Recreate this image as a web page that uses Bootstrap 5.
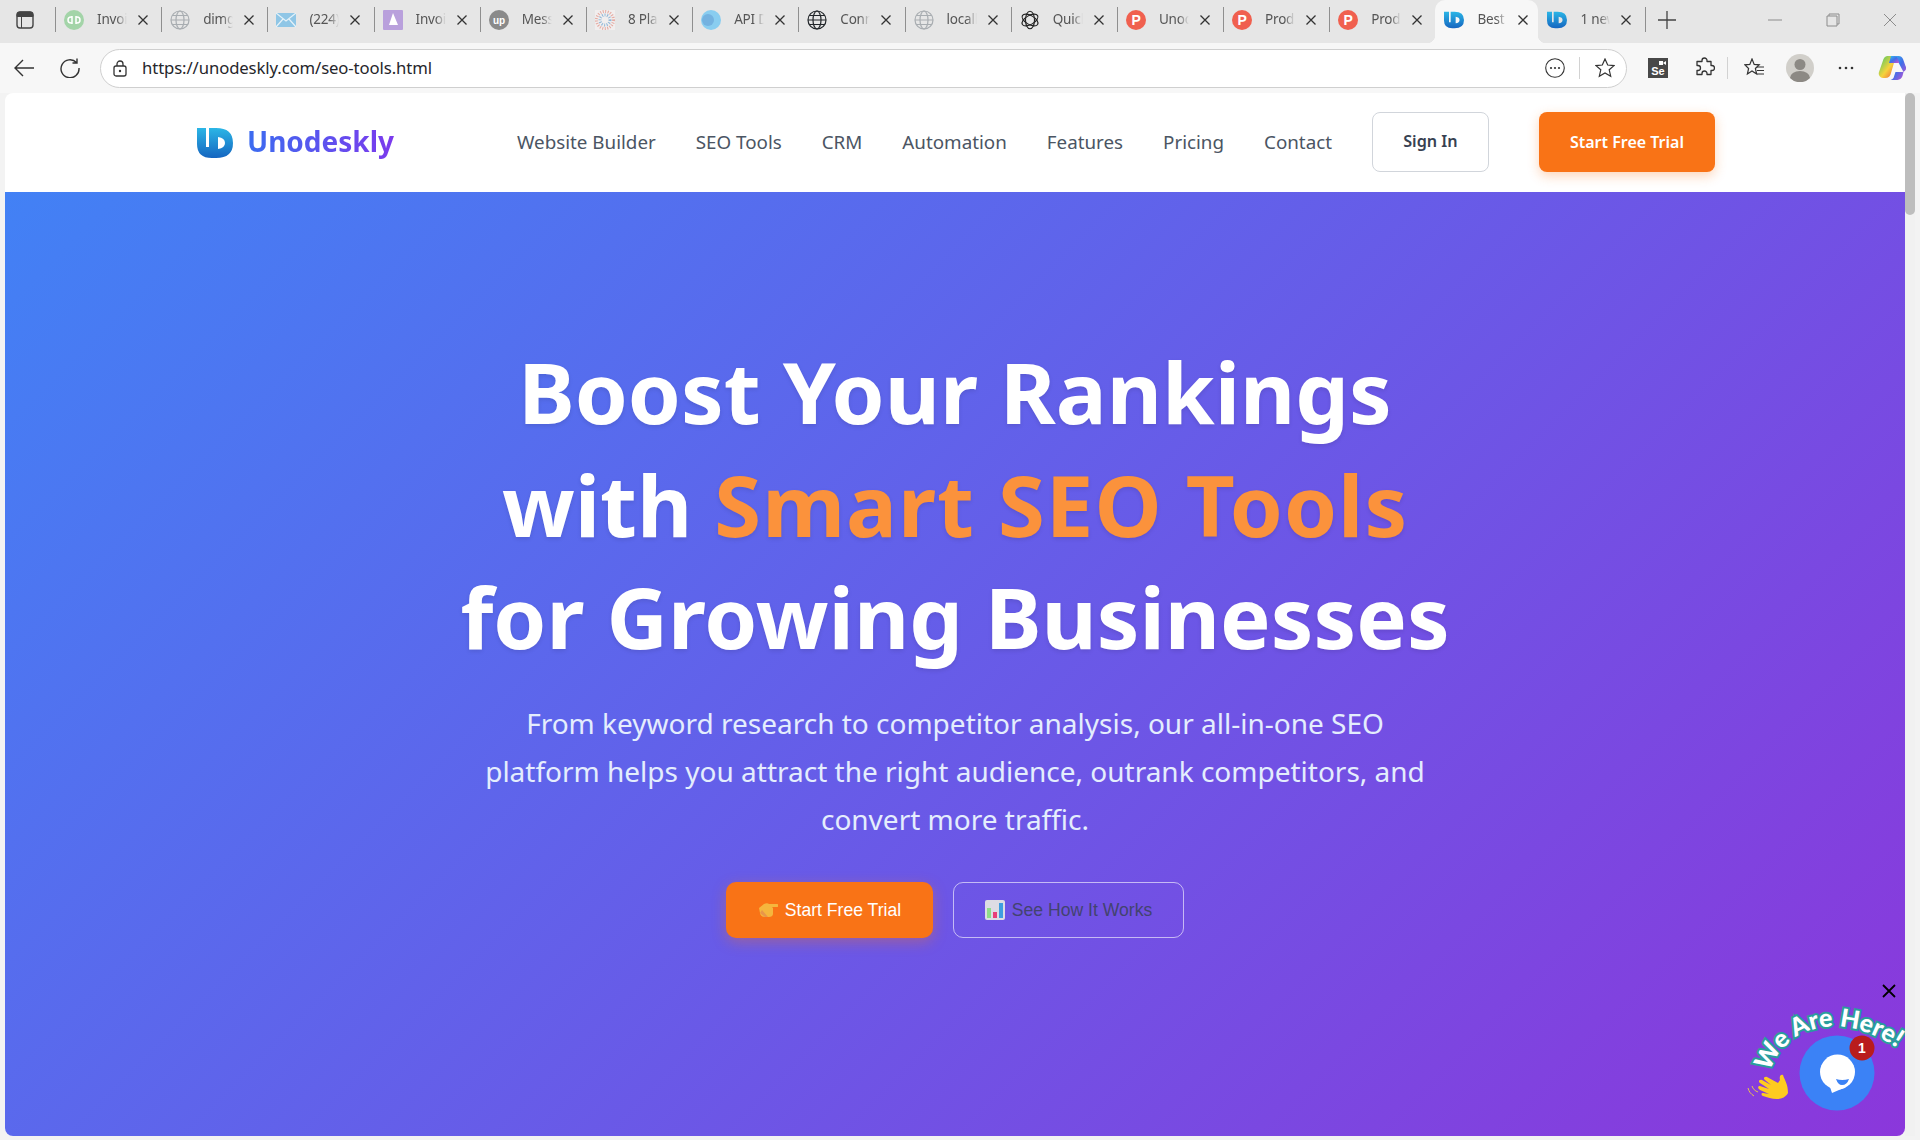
<!DOCTYPE html>
<html lang="en">
<head>
    <meta charset="UTF-8">
    <title>Unodeskly SEO Tools</title>
    <link href="https://cdn.jsdelivr.net/npm/bootstrap@5.3.0/dist/css/bootstrap.min.css" rel="stylesheet">
    <style>
        html, body { height: 100%; }
        body {
            background-color: #f3f3f3;
            font-family: "Noto Sans", "Open Sans", sans-serif;
            overflow: hidden;
        }
        /* browser window */
        .tabstrip { height: 43px; background-color: #e6e6e6; }
        .sidebar-btn { width: 55px; padding-left: 16px; padding-bottom: 4px; }
        .tabx {
            width: 106.2px;
            height: 43px;
            padding-left: 9px;
            padding-bottom: 4px;
            position: relative;
            color: #555;
            font-size: 13.5px;
            letter-spacing: -.2px;
        }
        .tabx::before {
            content: "";
            position: absolute;
            left: 0;
            top: 7px;
            height: 25px;
            width: 1px;
            background-color: #8f8f8f;
        }
        .tabx.active-tab {
            background-color: #f7f7f7;
            border-radius: 10px 10px 0 0;
            width: 103px;
        }
        .tabx.active-tab + .tabx::before { display: none; }
        .tabx.active-tab::before, .tabx.active-tab::after {
            content: "";
            position: absolute;
            bottom: 0;
            top: auto;
            width: 8px;
            height: 8px;
        }
        .tabx.active-tab::before {
            left: -8px;
            background: radial-gradient(circle at 0 0, transparent 8px, #f7f7f7 8.5px);
        }
        .tabx.active-tab::after {
            right: -8px;
            background: radial-gradient(circle at 100% 0, transparent 8px, #f7f7f7 8.5px);
        }
        .tab-fav { width: 20px; height: 20px; margin-right: 13px; flex: none; }
        .tab-title {
            width: 30px;
            overflow: hidden;
            white-space: nowrap;
            flex: none;
            -webkit-mask-image: linear-gradient(to right, #000 65%, transparent);
            mask-image: linear-gradient(to right, #000 65%, transparent);
        }
        .tab-x { width: 10px; height: 10px; margin-left: 11px; flex: none; color: #333; }
        .strip-end { height: 25px; width: 1px; background-color: #8f8f8f; margin-bottom: 4px; }
        .new-tab { width: 18px; height: 18px; margin-left: 12px; margin-bottom: 4px; color: #444; }
        .win-btn { color: #8c8c8c; margin-bottom: 4px; }
        .win-min { margin-left: 92px; }
        .win-res { margin-left: 44px; }
        .win-cls { margin-left: 43px; }

        .toolbar { height: 50px; background-color: #f7f7f7; padding-left: 1px; }
        .tb-ico { width: 46px; height: 46px; flex: none; color: #333; }
        .addr {
            width: 1527px;
            height: 39px;
            margin-left: 7px;
            margin-right: 8px;
            flex: none;
            background-color: #fff;
            border: 1px solid #cfcfcf;
            border-radius: 20px;
            padding-left: 12px;
            padding-right: 11px;
            color: #333;
        }
        .addr-url { font-size: 16.7px; color: #26262b; margin-left: 15px; letter-spacing: -.1px; }
        .addr-sep { margin-left: 14px; margin-right: 15px; }
        .tb-sep { width: 1px; height: 22px; background-color: #d2d2d2; flex: none; }
        .fav-gap { margin-left: 3px; }
        .avatar-ico { width: 28px; height: 28px; }

        /* page frame */
        .frame { height: 1047px; padding-left: 5px; }
        .page-wrap {
            width: 1900px;
            height: 1043px;
            border-radius: 8px 0 8px 8px;
            overflow: hidden;
            background-color: #fff;
            position: relative;
        }
        .scroll-track { width: 10px; height: 1043px; background-color: #f1f1f1; border-radius: 0 8px 0 0; }
        .scroll-thumb { height: 122px; background-color: #bdbdbd; border-radius: 5px; }

        /* site nav */
        .site-nav { height: 99px; padding: 0; justify-content: flex-start; }
        .logo-word {
            font-size: 28px;
            font-weight: 700;
            line-height: 1.4;
            margin-top: -2px;
            background: linear-gradient(90deg, #3b6cf0, #7c3aed);
            -webkit-background-clip: text;
            background-clip: text;
            color: transparent;
        }
        .navbar-nav .nav-link.site-link { font-size: 18.8px; color: #4b5563; padding: 0; white-space: nowrap; }
        .brand-box { margin-left: 192px; width: 320px; }
        .logo-mark { margin-right: 14px; margin-top: 1px; }
        .nav-gap { gap: 40px; }
        .btn-signin {
            width: 117px;
            height: 60px;
            margin-left: 40px;
            margin-top: -2px;
            border: 1px solid #d1d5db;
            border-radius: 8px;
            color: #374151;
            font-weight: 600;
            font-size: 16.2px;
        }
        .btn-trial {
            width: 176px;
            height: 60px;
            margin-left: 50px;
            margin-top: -2px;
            background-color: #f97316;
            border: 0;
            border-radius: 8px;
            color: #fff;
            font-weight: 600;
            font-size: 16px;
            box-shadow: 0 4px 12px rgba(249, 115, 22, .3);
        }
        .btn-trial:hover { background-color: #f97316; color: #fff; }

        /* hero */
        .hero {
            height: 944px;
            background: linear-gradient(135deg, #4281f5 0%, #8b37db 100%);
            padding-top: 143px;
        }
        .hero-title {
            font-size: 85px;
            line-height: 112.6px;
            font-weight: 700;
            color: #fff;
            margin-bottom: 26px;
            text-shadow: 0 2px 4px rgba(0, 0, 0, .1);
        }
        .hero-accent { color: #fb923c; letter-spacing: 1px; }
        .hero-sub {
            font-size: 28px;
            line-height: 48px;
            color: #e4edfd;
            margin-bottom: 39px;
        }
        .hero-cta { gap: 20px; }
        .hero-btn {
            height: 56px;
            border-radius: 10px;
            font-family: "Liberation Sans", Arial, sans-serif;
            font-size: 17.6px;
            padding: 0;
        }
        .hero-btn svg { width: 20px; height: 20px; margin-right: 7px; }
        .hero-main {
            width: 207px;
            background-color: #f97316;
            border: 0;
            color: #fff;
            box-shadow: 0 4px 14px rgba(249, 115, 22, .35);
        }
        .hero-main:hover { background-color: #f97316; color: #fff; }
        .hero-alt {
            width: 231px;
            border: 1px solid rgba(255, 255, 255, .6);
            color: #43436f;
        }

        /* chat widget */
        .chat-close { position: absolute; left: 1877px; top: 891px; width: 14px; height: 14px; color: #000; }
        .chat-art-wrap { position: absolute; left: 1740px; top: 903px; width: 165px; height: 200px; }
        .chat-word {
            font-family: "Lato", "Noto Sans", sans-serif;
            font-weight: 900;
            font-size: 25px;
            fill: #fff;
            stroke: #2a9d9d;
            stroke-width: 4px;
            paint-order: stroke;
        }
        .chat-count {
            font-family: "Liberation Sans", Arial, sans-serif;
            font-size: 14px;
            font-weight: 700;
            fill: #fff;
        }
        .fav-letter { font-family: "Liberation Sans", Arial, sans-serif; font-weight: 700; fill: #fff; }
    </style>
</head>
<body>
    <svg width="0" height="0" class="position-absolute">
        <defs>
            <linearGradient id="uGrad" x1="0" y1="0" x2="0" y2="1">
                <stop offset="0" stop-color="#2bb6e6"/>
                <stop offset="1" stop-color="#1565c0"/>
            </linearGradient>
            <linearGradient id="copA" x1="0" y1="0" x2="1" y2="1">
                <stop offset="0" stop-color="#36c5f0"/>
                <stop offset=".5" stop-color="#3f6fe8"/>
                <stop offset="1" stop-color="#d04fd0"/>
            </linearGradient>
            <linearGradient id="copB" x1="0" y1="0" x2="1" y2="1">
                <stop offset="0" stop-color="#3cc86a"/>
                <stop offset=".55" stop-color="#f5d33c"/>
                <stop offset="1" stop-color="#f0503c"/>
            </linearGradient>
            <symbol id="i-x" viewBox="0 0 10 10"><path d="M.5.5l9 9M9.500.5l-9 9" stroke="currentColor" stroke-width="1.300" fill="none"/></symbol>
            <symbol id="i-globe" viewBox="0 0 20 20"><g fill="none" stroke="currentColor" stroke-width="1.200"><circle cx="10" cy="10" r="9"/><ellipse cx="10" cy="10" rx="4" ry="9"/><path d="M1 10h18M2.300 5.500h15.400M2.300 14.500h15.400"/></g></symbol>
            <symbol id="i-u" viewBox="0 0 36 30"><path fill="url(#uGrad)" fill-rule="evenodd" d="M0 0H9V19H12V0H19Q36 0 36 15Q36 30 19 30H15Q0 30 0 16ZM21 9V21Q28 20 28 15Q28 10 21 9Z"/></symbol>
            <symbol id="i-ph" viewBox="0 0 20 20"><circle cx="10" cy="10" r="10" fill="#f0604f"/><text x="10" y="15" text-anchor="middle" font-size="14" class="fav-letter">P</text></symbol>
        </defs>
    </svg>

    <div class="tabstrip d-flex align-items-center">
        <div class="sidebar-btn d-flex">
            <svg width="18" height="18" viewBox="0 0 18 18"><rect x="1" y="1" width="16" height="16" rx="3" fill="none" stroke="#444" stroke-width="1.400"/><path d="M1 4a3 3 0 0 1 3-3h10a3 3 0 0 1 3 3v1.500H1zM5.500 5v12" fill="#444" stroke="#444"/></svg>
        </div>
        <div class="tabx d-flex align-items-center"><svg class="tab-fav" viewBox="0 0 20 20"><circle cx="10" cy="10" r="10" fill="#a3d4a8"/><path d="M8 6v8M8 7H7a3 3 0 0 0 0 6h1M12 14V6M12 7h1a3 3 0 0 1 0 6h-1" fill="none" stroke="#fff" stroke-width="1.500"/></svg><span class="tab-title">Invoice</span><svg class="tab-x"><use href="#i-x"/></svg></div>
        <div class="tabx d-flex align-items-center"><svg class="tab-fav text-secondary opacity-50"><use href="#i-globe"/></svg><span class="tab-title">dimgrey</span><svg class="tab-x"><use href="#i-x"/></svg></div>
        <div class="tabx d-flex align-items-center"><svg class="tab-fav" viewBox="0 0 20 20"><rect y="3" width="20" height="14" fill="#8fc6e6"/><path d="M0 3l10 8 10-8M0 17l7-8M20 17l-7-8" fill="none" stroke="#e6f2f8" stroke-width="1.200"/></svg><span class="tab-title">(224) Inbox</span><svg class="tab-x"><use href="#i-x"/></svg></div>
        <div class="tabx d-flex align-items-center"><svg class="tab-fav" viewBox="0 0 20 20"><rect width="20" height="20" rx="1" fill="#b9a0dc"/><path d="M10 3l5 12H6z" fill="#fff"/></svg><span class="tab-title">Invoice</span><svg class="tab-x"><use href="#i-x"/></svg></div>
        <div class="tabx d-flex align-items-center"><svg class="tab-fav" viewBox="0 0 20 20"><circle cx="10" cy="10" r="10" fill="#8a8a8a"/><text x="10" y="14" text-anchor="middle" font-size="10" class="fav-letter">up</text></svg><span class="tab-title">Messages</span><svg class="tab-x"><use href="#i-x"/></svg></div>
        <div class="tabx d-flex align-items-center"><svg class="tab-fav" viewBox="0 0 20 20"><rect width="20" height="20" fill="#f1eeee"/><circle cx="10" cy="10" r="8.500" fill="none" stroke="#e5a9a0" stroke-width="3" stroke-dasharray="1 1.500"/><circle cx="10" cy="10" r="5" fill="none" stroke="#8fb7d8" stroke-width="3" stroke-dasharray="1 1.500"/></svg><span class="tab-title">8 Plans</span><svg class="tab-x"><use href="#i-x"/></svg></div>
        <div class="tabx d-flex align-items-center"><svg class="tab-fav" viewBox="0 0 20 20"><circle cx="10" cy="10" r="10" fill="#89cdf0"/><circle cx="7" cy="10" r="6" fill="#74b2e0"/></svg><span class="tab-title">API Docs</span><svg class="tab-x"><use href="#i-x"/></svg></div>
        <div class="tabx d-flex align-items-center"><svg class="tab-fav text-dark"><use href="#i-globe"/></svg><span class="tab-title">Connect</span><svg class="tab-x"><use href="#i-x"/></svg></div>
        <div class="tabx d-flex align-items-center"><svg class="tab-fav text-secondary opacity-50"><use href="#i-globe"/></svg><span class="tab-title">localhost</span><svg class="tab-x"><use href="#i-x"/></svg></div>
        <div class="tabx d-flex align-items-center"><svg class="tab-fav" viewBox="0 0 20 20"><g fill="none" stroke="#222" stroke-width="1.100"><ellipse cx="10" cy="10" rx="4.500" ry="8.800"/><ellipse cx="10" cy="10" rx="4.500" ry="8.800" transform="rotate(60 10 10)"/><ellipse cx="10" cy="10" rx="4.500" ry="8.800" transform="rotate(120 10 10)"/></g></svg><span class="tab-title">Quick</span><svg class="tab-x"><use href="#i-x"/></svg></div>
        <div class="tabx d-flex align-items-center"><svg class="tab-fav"><use href="#i-ph"/></svg><span class="tab-title">Unodeskly</span><svg class="tab-x"><use href="#i-x"/></svg></div>
        <div class="tabx d-flex align-items-center"><svg class="tab-fav"><use href="#i-ph"/></svg><span class="tab-title">Product</span><svg class="tab-x"><use href="#i-x"/></svg></div>
        <div class="tabx d-flex align-items-center"><svg class="tab-fav"><use href="#i-ph"/></svg><span class="tab-title">Product</span><svg class="tab-x"><use href="#i-x"/></svg></div>
        <div class="tabx active-tab d-flex align-items-center"><svg class="tab-fav"><use href="#i-u"/></svg><span class="tab-title">Best SEO</span><svg class="tab-x"><use href="#i-x"/></svg></div>
        <div class="tabx d-flex align-items-center"><svg class="tab-fav"><use href="#i-u"/></svg><span class="tab-title">1 new</span><svg class="tab-x"><use href="#i-x"/></svg></div>
        <div class="strip-end"></div>
        <svg class="new-tab" viewBox="0 0 18 18"><path d="M9 0v18M0 9h18" stroke="currentColor" stroke-width="1.300"/></svg>
        <svg class="win-btn win-min" width="14" height="14" viewBox="0 0 14 14"><path d="M0 7h14" stroke="currentColor"/></svg>
        <svg class="win-btn win-res" width="14" height="14" viewBox="0 0 14 14"><path d="M3 3V1h10v10h-2M1 3h10v10H1z" fill="none" stroke="currentColor"/></svg>
        <svg class="win-btn win-cls" width="14" height="14" viewBox="0 0 14 14"><path d="M1 1l12 12M13 1L1 13" stroke="currentColor"/></svg>
    </div>

    <div class="toolbar d-flex align-items-center">
        <div class="tb-ico d-flex align-items-center justify-content-center">
            <svg width="20" height="18" viewBox="0 0 20 18"><path d="M9 1L1 9l8 8M1 9h19" fill="none" stroke="currentColor" stroke-width="1.400"/></svg>
        </div>
        <div class="tb-ico d-flex align-items-center justify-content-center">
            <svg width="20" height="20" viewBox="0 0 20 20"><path d="M16.500 4.500A9 9 0 1 0 19 10M17 .500v4.500h-4.500" fill="none" stroke="currentColor" stroke-width="1.400"/></svg>
        </div>
        <div class="addr d-flex align-items-center">
            <svg width="14" height="17" viewBox="0 0 14 17"><rect x="1" y="6" width="12" height="10" rx="2" fill="none" stroke="currentColor" stroke-width="1.300"/><path d="M4 6V4a3 3 0 0 1 6 0v2" fill="none" stroke="currentColor" stroke-width="1.300"/><circle cx="7" cy="11" r="1.200" fill="currentColor"/></svg>
            <span class="addr-url">https://unodeskly.com/seo-tools.html</span>
            <svg class="ms-auto" width="20" height="20" viewBox="0 0 20 20"><circle cx="10" cy="10" r="9.300" fill="none" stroke="currentColor" stroke-width="1.100"/><circle cx="6" cy="10" r="1.100" fill="currentColor"/><circle cx="10" cy="10" r="1.100" fill="currentColor"/><circle cx="14" cy="10" r="1.100" fill="currentColor"/></svg>
            <div class="tb-sep addr-sep"></div>
            <svg width="20" height="20" viewBox="0 0 20 20"><path d="M10 1l2.700 6 6.300.6-4.800 4.200 1.500 6.400L10 15l-5.700 3.200 1.500-6.400L1 7.600 7.300 7z" fill="none" stroke="currentColor" stroke-width="1.200"/></svg>
        </div>
        <div class="tb-ico d-flex align-items-center justify-content-center">
            <svg width="20" height="20" viewBox="0 0 20 20"><rect width="20" height="20" fill="#484848"/><text x="10" y="17" text-anchor="middle" font-size="11" class="fav-letter">Se</text><path d="M11 3h4v4h-4zM15 5l3-2v4z" fill="#fff"/></svg>
        </div>
        <div class="tb-ico d-flex align-items-center justify-content-center">
            <svg width="21" height="22" viewBox="0 0 21 22"><path d="M8 3.500a2.500 2.500 0 0 1 5 0v1h4v4h1a2.500 2.500 0 0 1 0 5h-1v4h-4v-1a2.500 2.500 0 0 0-5 0v1H3v-4h1a2.500 2.500 0 0 0 0-5H3v-4h5z" fill="none" stroke="currentColor" stroke-width="1.300" stroke-linejoin="round"/></svg>
        </div>
        <div class="tb-sep"></div>
        <div class="tb-ico fav-gap d-flex align-items-center justify-content-center">
            <svg width="21" height="20" viewBox="0 0 21 20"><path d="M8 1l2.200 5.400 5 .4-3.800 3.700 1.200 5.500L8 13l-4.600 3 1.200-5.500L.8 6.800l5-.4z" fill="none" stroke="currentColor" stroke-width="1.200"/><path d="M13 9h7M13 12.500h7M13 16h7" stroke="currentColor" stroke-width="1.200"/></svg>
        </div>
        <div class="tb-ico d-flex align-items-center justify-content-center">
            <svg class="avatar-ico" viewBox="0 0 28 28"><circle cx="14" cy="14" r="14" fill="#d1cfca"/><circle cx="14" cy="10.500" r="5.500" fill="#8c8984"/><path d="M4 24a10 7 0 0 1 20 0 14 14 0 0 1-20 0z" fill="#8c8984"/></svg>
        </div>
        <div class="tb-ico d-flex align-items-center justify-content-center">
            <svg width="16" height="4" viewBox="0 0 16 4"><circle cx="2" cy="2" r="1.300" fill="currentColor"/><circle cx="8" cy="2" r="1.300" fill="currentColor"/><circle cx="14" cy="2" r="1.300" fill="currentColor"/></svg>
        </div>
        <div class="tb-ico d-flex align-items-center justify-content-center">
            <svg width="28" height="28" viewBox="0 0 28 28"><path d="M9 2h9l-5 17a6 6 0 0 1-6 5H5a4.500 4.500 0 0 1-4-6l4.500-13A5 5 0 0 1 9 2z" fill="url(#copB)"/><path d="M17 2h3a5 5 0 0 1 5 3l2.500 7a4 4 0 0 1-4 6h-6l-2 6a5 5 0 0 1-3 2h7a6 6 0 0 0 5-4l1-4" fill="url(#copA)"/><path d="M17 2h-4l-2 7h10l-1-4a4 4 0 0 0-3-3z" fill="url(#copA)"/></svg>
        </div>
    </div>

    <div class="frame d-flex">
        <div class="page-wrap flex-shrink-0">
            <nav class="navbar navbar-expand site-nav">
                <div class="brand-box d-flex align-items-center">
                    <svg width="36" height="30" class="logo-mark"><use href="#i-u"/></svg>
                    <a href="#" class="logo-word text-decoration-none">Unodeskly</a>
                </div>
                <ul class="navbar-nav nav-gap align-items-center">
                    <li class="nav-item"><a class="nav-link site-link" href="#">Website Builder</a></li>
                    <li class="nav-item"><a class="nav-link site-link" href="#">SEO Tools</a></li>
                    <li class="nav-item"><a class="nav-link site-link" href="#">CRM</a></li>
                    <li class="nav-item"><a class="nav-link site-link" href="#">Automation</a></li>
                    <li class="nav-item"><a class="nav-link site-link" href="#">Features</a></li>
                    <li class="nav-item"><a class="nav-link site-link" href="#">Pricing</a></li>
                    <li class="nav-item"><a class="nav-link site-link" href="#">Contact</a></li>
                </ul>
                <a href="#" class="btn btn-signin d-flex align-items-center justify-content-center">Sign In</a>
                <a href="#" class="btn btn-trial d-flex align-items-center justify-content-center">Start Free Trial</a>
            </nav>

            <section class="hero text-center">
                <h1 class="hero-title">Boost Your Rankings<br>with <span class="hero-accent">Smart SEO Tools</span><br>for Growing Businesses</h1>
                <p class="hero-sub">From keyword research to competitor analysis, our all-in-one SEO<br>platform helps you attract the right audience, outrank competitors, and<br>convert more traffic.</p>
                <div class="d-flex justify-content-center hero-cta">
                    <a href="#" class="btn hero-btn hero-main d-flex align-items-center justify-content-center">
                        <svg viewBox="0 0 20 20"><path d="M1 8l5-4c2-1 4-1 5 0l8 0a1.300 1.300 0 0 1 0 3h-5l1 1 0 6c0 2-2 3-4 3H7c-3 0-5-2-5-4z" fill="#f5b63d"/><path d="M2 13l5 4h3l-6-7z" fill="#e8964a"/></svg>
                        Start Free Trial
                    </a>
                    <a href="#" class="btn hero-btn hero-alt d-flex align-items-center justify-content-center">
                        <svg viewBox="0 0 20 20"><rect width="20" height="20" rx="2" fill="#dcdce4"/><rect x="2" y="8" width="4" height="10" fill="#8fdc8a"/><rect x="8" y="12" width="4" height="6" fill="#e83e78"/><rect x="14" y="3" width="4" height="15" fill="#3f9de0"/></svg>
                        See How It Works
                    </a>
                </div>
            </section>

            <svg class="chat-close" viewBox="0 0 14 14"><path d="M1 1l12 12M13 1L1 13" stroke="currentColor" stroke-width="1.800"/></svg>
            <svg class="chat-art-wrap" viewBox="0 0 165 200">
                <defs><path id="chatArc" d="M25 76C36 38 90 4 163 60"/></defs>
                <text class="chat-word"><textPath href="#chatArc">We Are Here!</textPath></text>
                <circle cx="92" cy="77" r="37.500" fill="#3b82f6"/>
                <circle cx="92.500" cy="76" r="17.500" fill="#fff"/>
                <path d="M84 88L87 97L101 91z" fill="#fff"/>
                <path d="M91 83Q97 85 104 83Q102 89 97 89Q93 89 91 83z" fill="#3b82f6"/>
                <circle cx="117" cy="52" r="12.500" fill="#b91c1c"/>
                <text x="117" y="57" text-anchor="middle" class="chat-count">1</text>
                <path d="M43 97C43 88 40 85 38 79C36 78 34 80 35 84L33 87L22 81C19 80 18 83 20 84L26 89L17 84C14 83 13 86 15 87L24 93L15 90C12 90 13 93 15 94L24 98L18 97C16 97 16 99 18 100C26 103 38 106 43 97z" fill="#fecb20"/>
                <path d="M3 92C4 96 6 98 9 100M7 90C8 93 10 95 13 96" fill="none" stroke="#e8c050" stroke-width="1"/>
            </svg>
        </div>
        <div class="scroll-track"><div class="scroll-thumb"></div></div>
    </div>

    <script src="https://cdn.jsdelivr.net/npm/bootstrap@5.3.0/dist/js/bootstrap.bundle.min.js"></script>
</body>
</html>
